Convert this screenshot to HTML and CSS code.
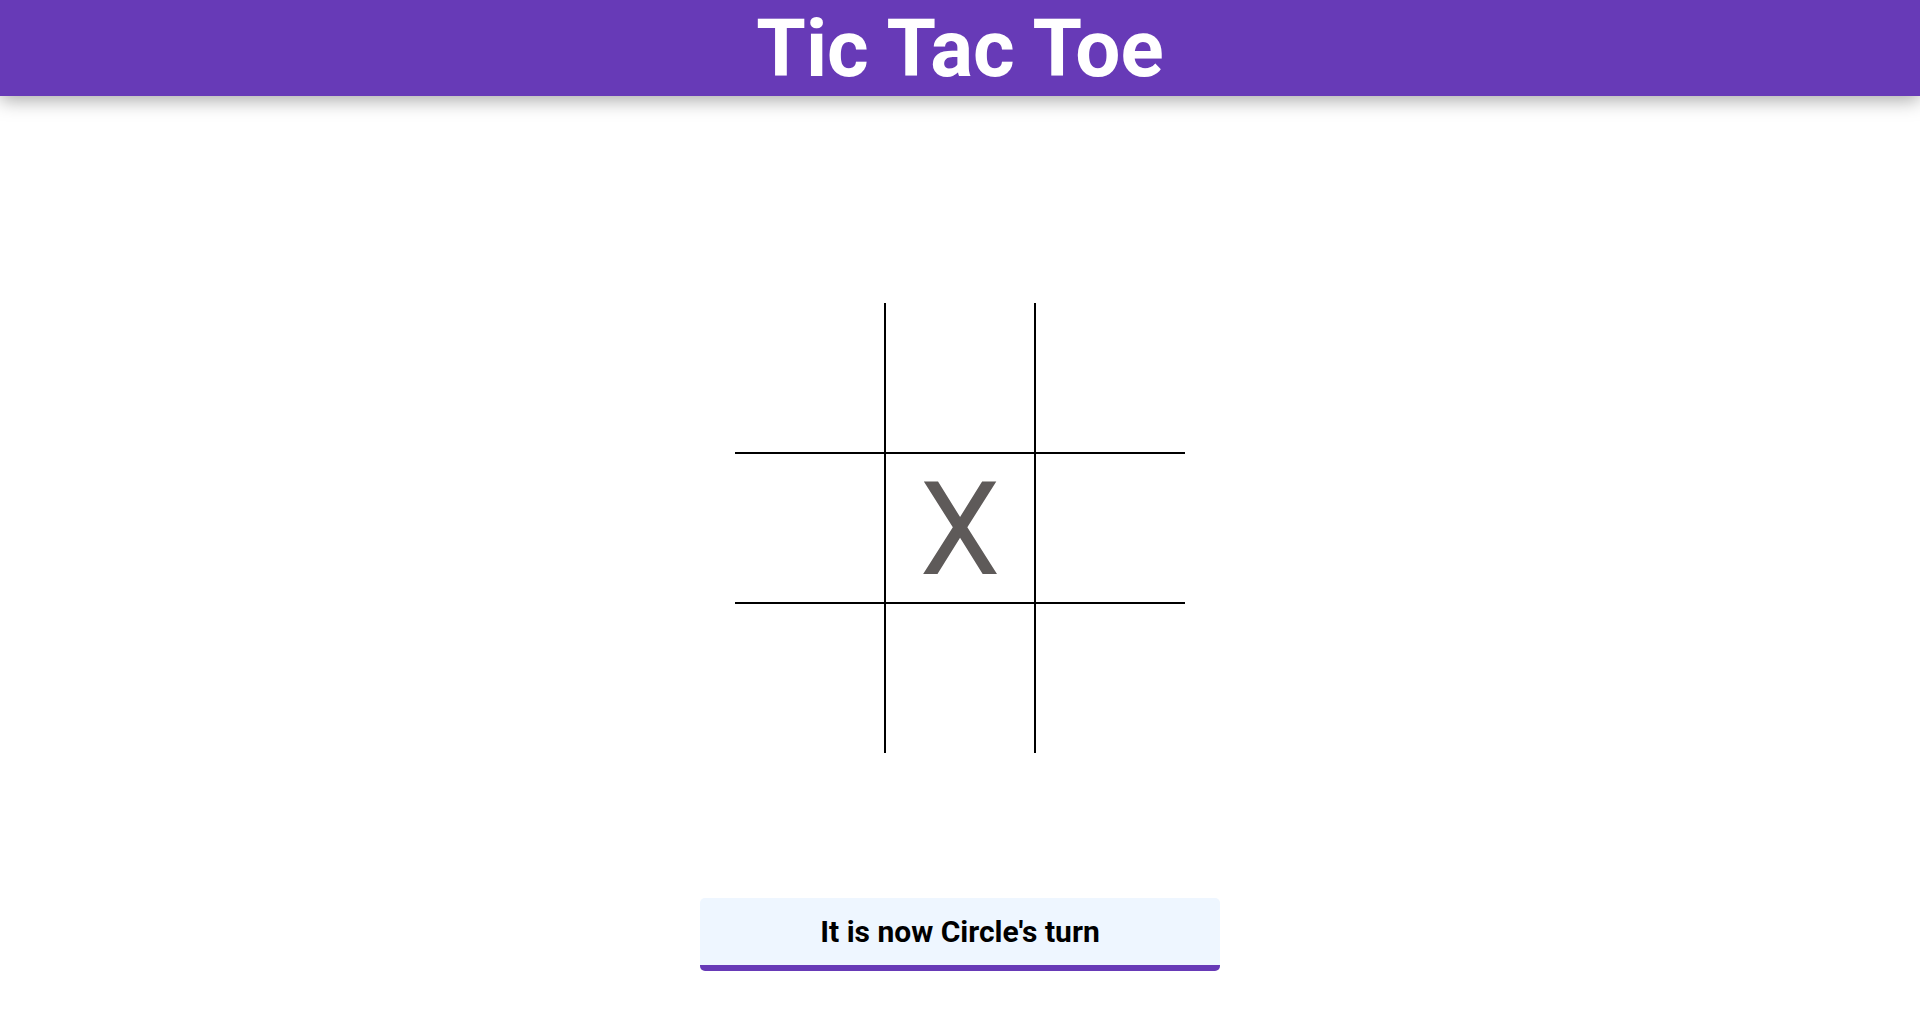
FILE: index.html
```html
<!DOCTYPE html>
<html lang="en">
<head>
<meta charset="utf-8">
<title>Tic Tac Toe</title>
<link rel="stylesheet" href="styles.css">
</head>
<body>
<header class="topbar">
  <h1 class="title">Tic Tac Toe</h1>
</header>
<main class="main">
  <div class="board">
    <div class="cell c-tl"></div>
    <div class="cell c-tm"></div>
    <div class="cell c-tr"></div>
    <div class="cell c-ml"></div>
    <div class="cell c-mm">X</div>
    <div class="cell c-mr"></div>
    <div class="cell c-bl"></div>
    <div class="cell c-bm"></div>
    <div class="cell c-br"></div>
  </div>
  <div class="status">It is now Circle's turn</div>
</main>
</body>
</html>
```
FILE: styles.css
```css
* { box-sizing: border-box; }
html, body { margin: 0; padding: 0; }
body {
  font-family: Roboto, "Liberation Sans", Arial, sans-serif;
  background: #ffffff;
  color: #000;
  height: 1019px;
  overflow: hidden;
}
.topbar {
  height: 96px;
  background: #673ab7;
  box-shadow: 0 4px 18px rgba(0,0,0,0.35);
  display: flex;
  justify-content: center;
  align-items: center;
  position: relative;
  z-index: 1;
}
.title {
  margin: 0;
  color: #fff;
  font-weight: 700;
  font-size: 80px;
  line-height: 96px;
  padding-top: 2px;
}
.main {
  display: flex;
  flex-direction: column;
  align-items: center;
  padding-top: 207px;
}
.board {
  display: grid;
  grid-template-columns: repeat(3, 150px);
  grid-template-rows: repeat(3, 150px);
}
.cell {
  display: flex;
  align-items: center;
  justify-content: center;
  font-family: Roboto, "Liberation Sans", sans-serif;
  font-weight: 400;
  font-size: 129px;
  line-height: 1;
  color: #5e5a59;
  padding-top: 2px;
}
.c-tl, .c-tm, .c-ml, .c-mm, .c-bl, .c-bm { border-right: 1px solid #000; }
.c-tm, .c-tr, .c-mm, .c-mr, .c-bm, .c-br { border-left: 1px solid #000; }
.c-tl, .c-tm, .c-tr, .c-ml, .c-mm, .c-mr { border-bottom: 1px solid #000; }
.c-ml, .c-mm, .c-mr, .c-bl, .c-bm, .c-br { border-top: 1px solid #000; }
.status {
  margin-top: 145px;
  width: 520px;
  height: 73px;
  background: #eef6ff;
  border-bottom: 6px solid #673ab7;
  border-radius: 5px;
  display: flex;
  align-items: center;
  justify-content: center;
  font-weight: 700;
  font-size: 30px;
  color: #000;
}
```
